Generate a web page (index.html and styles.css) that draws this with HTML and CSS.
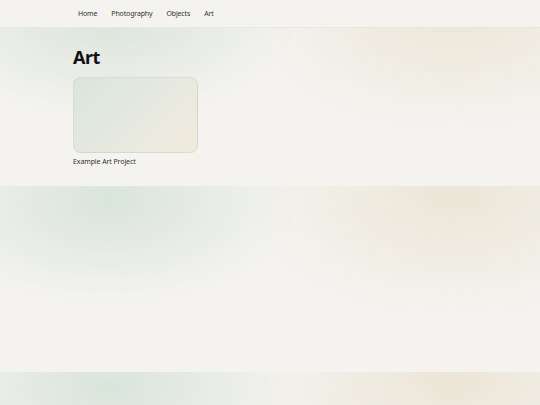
FILE: index.html
```html
<!DOCTYPE html>
<html lang="en">
<head>
<meta charset="utf-8">
<title>Art</title>
<link rel="stylesheet" href="styles.css">
</head>
<body>
<header class="site-header">
  <nav class="nav">
    <a class="nav-link" href="#">Home</a>
    <a class="nav-link" href="#">Photography</a>
    <a class="nav-link" href="#">Objects</a>
    <a class="nav-link" href="#">Art</a>
  </nav>
</header>
<main class="main">
  <h1 class="title">Art</h1>
  <div class="grid">
    <a class="card" href="#">
      <div class="thumb"></div>
      <div class="caption">Example Art Project</div>
    </a>
  </div>
</main>
</body>
</html>
```
FILE: styles.css
```css
html, body {
  margin: 0;
  padding: 0;
}
body {
  font-family: "Noto Sans", "Open Sans", sans-serif;
  color: #1c1c1c;
  background:
    radial-gradient(ellipse 35% 55% at 20% 8%, rgba(205, 222, 210, 0.7), rgba(205, 222, 210, 0) 100%),
    radial-gradient(ellipse 38% 65% at 84% 5%, rgba(232, 224, 204, 0.7), rgba(232, 224, 204, 0) 100%),
    #f4f3ef;
}
.site-header {
  height: 27px;
  background: #f4f3ef;
  border-bottom: 1px solid rgba(0, 0, 0, 0.05);
  display: flex;
  align-items: center;
}
.nav {
  display: flex;
  gap: 14px;
  padding-left: 78px;
}
.nav-link {
  font-size: 7px;
  letter-spacing: -0.15px;
  color: #333;
  text-decoration: none;
}
.main {
  padding: 19px 73px 20px;
}
.title {
  margin: 0 0 9px;
  font-size: 18px;
  letter-spacing: -0.5px;
  font-weight: 700;
  line-height: 21px;
  color: #111;
}
.grid {
  display: flex;
}
.card {
  display: flex;
  flex-direction: column;
  gap: 4px;
  text-decoration: none;
}
.thumb {
  width: 123px;
  height: 74px;
  border-radius: 8px;
  border: 1px solid rgba(0, 0, 0, 0.06);
  background: linear-gradient(135deg, #d9e5dc 0%, #e6e9e0 50%, #efeadb 100%);
}
.caption {
  font-size: 7px;
  letter-spacing: -0.1px;
  line-height: 9px;
  color: #333;
  font-weight: 400;
}
```
